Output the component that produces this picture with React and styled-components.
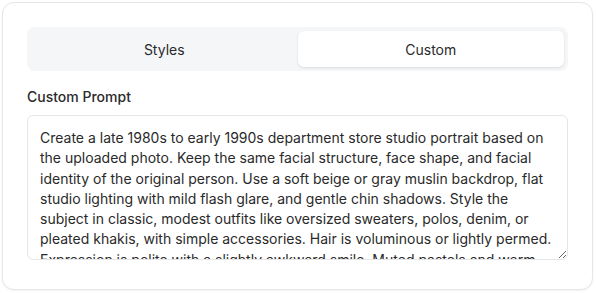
import { useState } from 'react';
import styled, { createGlobalStyle } from 'styled-components';

const GlobalStyle = createGlobalStyle`
	html, body {
		margin: 0;
		padding: 0;
		background: #fff;
	}
	body {
		font-family: Inter, "Noto Sans", sans-serif;
		color: #1f1f1f;
	}
`;

const Page = styled.div`
	padding: 2px;
`;

const Card = styled.div`
	box-sizing: border-box;
	width: 591px;
	height: 288px;
	padding: 24px 24px 30px;
	border: 1px solid #e6e6e6;
	border-radius: 12px;
	background: #fff;
	box-shadow: 0 1px 2px rgba(0, 0, 0, 0.05);
`;

const TabList = styled.div`
	display: grid;
	grid-template-columns: 1fr 1fr;
	padding: 4px;
	height: 44px;
	box-sizing: border-box;
	background: #f5f6f8;
	border-radius: 8px;
`;

const Tab = styled.button`
	border: none;
	border-radius: 6px;
	font-family: inherit;
	font-size: 14px;
	color: #2a2a2a;
	cursor: pointer;
	background: ${(p) => (p.$active ? '#fff' : 'transparent')};
	box-shadow: ${(p) => (p.$active ? '0 1px 3px rgba(0,0,0,0.08), 0 1px 2px rgba(0,0,0,0.04)' : 'none')};
`;

const Field = styled.div`
	display: flex;
	flex-direction: column;
	gap: 8px;
	margin-top: 16px;
`;

const Label = styled.label`
	font-size: 14px;
	line-height: 20px;
	font-weight: 500;
	color: #2a2a2a;
`;

const Prompt = styled.textarea`
	display: block;
	box-sizing: border-box;
	width: 100%;
	height: 145px;
	padding: 12px;
	border: 1px solid #e5e6e8;
	border-radius: 6px;
	font-family: inherit;
	font-size: 14px;
	line-height: 20.3px;
	color: #2a2a2a;
	resize: vertical;
	outline: none;
	overflow: hidden;
`;

const promptText =
	'Create a late 1980s to early 1990s department store studio portrait based on the uploaded photo. Keep the same facial structure, face shape, and facial identity of the original person. Use a soft beige or gray muslin backdrop, flat studio lighting with mild flash glare, and gentle chin shadows. Style the subject in classic, modest outfits like oversized sweaters, polos, denim, or pleated khakis, with simple accessories. Hair is voluminous or lightly permed. Expression is polite with a slightly awkward smile. Muted pastels and warm tones, soft film grain, and a slightly faded color finish.';

export default function App() {
	const [tab, setTab] = useState('custom');
	const [text, setText] = useState(promptText);

	return (
		<Page>
			<GlobalStyle />
			<Card>
				<TabList>
					<Tab $active={tab === 'styles'} onClick={() => setTab('styles')}>
						Styles
					</Tab>
					<Tab $active={tab === 'custom'} onClick={() => setTab('custom')}>
						Custom
					</Tab>
				</TabList>
				<Field>
					<Label htmlFor="prompt">Custom Prompt</Label>
					<Prompt id="prompt" value={text} onChange={(e) => setText(e.target.value)} />
				</Field>
			</Card>
		</Page>
	);
}
